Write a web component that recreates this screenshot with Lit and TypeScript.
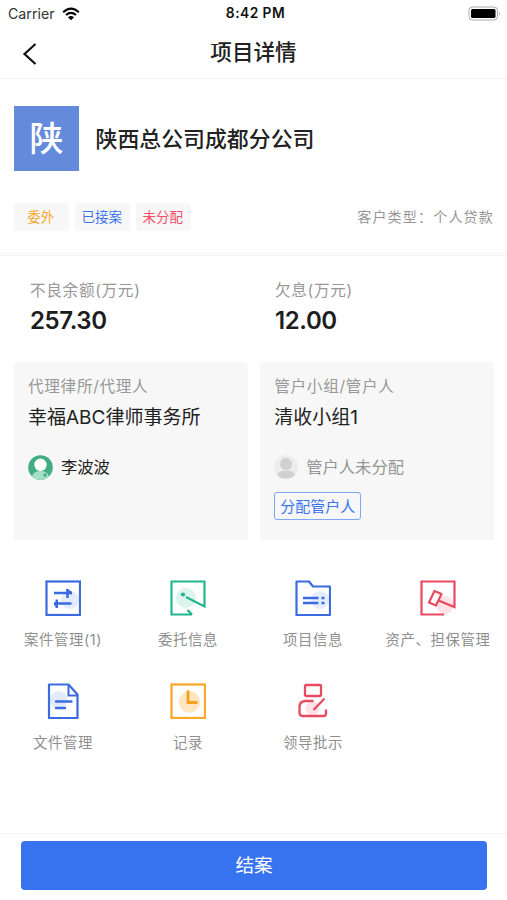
import { LitElement, html, css, svg } from "lit";
import { customElement } from "lit/decorators.js";

const icons = {
  transfer: svg`
    <circle cx="25" cy="20" r="9" fill="#e6ecff"/>
    <rect x="1.5" y="1.5" width="33.500" height="33.500" stroke="#3b6be0" stroke-width="2.200"/>
    <path d="M9 13H26.500M22.500 9V18M26.500 23.500H9.500M11.800 19.500V28" stroke="#3b6be0" stroke-width="2.500"/>
    <path d="M21.500 8.500L27 11.800V14.200H21.500ZM13 28.500L9 25V22.300H13Z" fill="#3b6be0"/>`,
  entrust: svg`
    <circle cx="16" cy="18" r="10" fill="#dcf4ec"/>
    <path d="M22 34.500H1.500V1.500H34.500V26.500L16 17M17.500 30L22 34.500" stroke="#22b68f" stroke-width="2.200"/>
    <circle cx="13" cy="14.500" r="2.100" fill="#22b68f"/>`,
  folder: svg`
    <circle cx="25" cy="20" r="9" fill="#e6ecff"/>
    <path d="M1.500 1.500H14L18 6.500H35V35H1.500Z" stroke="#3b6be0" stroke-width="2.200" stroke-linejoin="round"/>
    <path d="M8 18H23.500M8 23H23.500M26.500 18H29.500M26.500 23H29.500" stroke="#3b6be0" stroke-width="2.500"/>`,
  gavel: svg`
    <circle cx="25" cy="25" r="9" fill="#ffe3e7"/>
    <path d="M24 34.500H1.500V1.500H34.500V27L18.500 20.500" stroke="#e84a60" stroke-width="2.200"/>
    <path d="M14.500 11L21.500 14 16 25.500 9 22.500Z" stroke="#e84a60" stroke-width="2.200" stroke-linejoin="round"/>`,
  file: svg`
    <circle cx="13.500" cy="17" r="9" fill="#e3eafc"/>
    <path d="M4 1.500H23.500L32.500 11.500V35H4Z" stroke="#3b6be0" stroke-width="2.200" stroke-linejoin="round"/>
    <path d="M23.500 2.500V12.500H32" stroke="#3b6be0" stroke-width="2"/>
    <path d="M11 18.500H26.500M11 25H20" stroke="#3b6be0" stroke-width="2.400" stroke-linecap="round"/>`,
  clock: svg`
    <circle cx="19.500" cy="19" r="10.700" fill="#ffe6c0"/>
    <rect x="1.500" y="1.500" width="33.500" height="33.500" stroke="#fba92b" stroke-width="2.300"/>
    <path d="M18 7.500V19.500H27.500" stroke="#f5a01f" stroke-width="2.800"/>`,
  approve: svg`
    <circle cx="17.500" cy="25.500" r="7" fill="#ffe3e7"/>
    <rect x="10" y="2" width="16" height="11" rx="1" stroke="#e84a60" stroke-width="2.300"/>
    <path d="M18.500 18H10Q4.500 18.500 4.500 24V30Q4.500 33 8 33H28.500Q31 33 31 30.500V26.500" stroke="#e84a60" stroke-width="2.300"/>
    <path d="M18.500 27L29.500 15.500" stroke="#e84a60" stroke-width="2.300"/>`,
};

const actions: { icon: keyof typeof icons; label: string }[] = [
  { icon: "transfer", label: "案件管理(1)" },
  { icon: "entrust", label: "委托信息" },
  { icon: "folder", label: "项目信息" },
  { icon: "gavel", label: "资产、担保管理" },
  { icon: "file", label: "文件管理" },
  { icon: "clock", label: "记录" },
  { icon: "approve", label: "领导批示" },
];

@customElement("app-root")
export class AppRoot extends LitElement {
  static styles = css`
    :host {
      display: flex;
      flex-direction: column;
      height: 900px;
      overflow: hidden;
      background: #fff;
      color: #222;
      font-family: Inter, "Noto Sans CJK SC", sans-serif;
      white-space: nowrap;
    }
    * { box-sizing: border-box; }
    svg { display: block; flex: none; fill: none; }
    .status {
      display: grid;
      grid-template-columns: 1fr auto 1fr;
      align-items: center;
      height: 27px;
      padding: 0 6px 0 8px;
      font-size: 14px;
      line-height: 27px;
    }
    .carrier { display: flex; align-items: center; gap: 7px; font-size: 14.2px; color: #333; }
    .time { font-weight: 600; font-size: 13.8px; letter-spacing: .45px; color: #111; padding-left: 2px; }
    .battery { justify-self: end; }
    .nav {
      display: grid;
      grid-template-columns: 60px 1fr 60px;
      align-items: center;
      height: 52px;
      border-bottom: 1px solid #f0f0f0;
    }
    .back { margin: 2px 0 0 22px; }
    .title { text-align: center; font-size: 21.6px; line-height: 30px; font-weight: 500; padding-bottom: 1px; }
    .company { display: flex; align-items: center; gap: 16.500px; padding: 27px 14px 0; }
    .logo {
      width: 65px;
      height: 65px;
      background: #638adb;
      color: #fff;
      font-size: 34px;
      line-height: 65px;
      text-align: center;
      font-weight: 500;
    }
    .name { font-size: 21.9px; line-height: 30px; font-weight: 500; }
    .meta {
      display: flex;
      align-items: center;
      gap: 6.500px;
      padding: 0 14px;
      margin-top: 32px;
      height: 28px;
    }
    .tag {
      width: 54.500px;
      height: 28px;
      padding-right: 1px;
      border-radius: 3px;
      background: #f7f7f7;
      text-align: center;
      font-size: 13.5px;
      line-height: 28px;
    }
    .orange { color: #f7a62b; }
    .blue { color: #3b73ee; }
    .red { color: #f04d68; }
    .type { margin-left: auto; font-size: 14px; line-height: 28px; letter-spacing: 1.2px; color: #969696; margin-right: -1px; }
    .rule { height: 3px; margin-top: 22px; border: solid #f5f5f5; border-width: 1px 0; flex: none; }
    .stats { display: grid; grid-template-columns: 245px 1fr; padding: 23px 0 0 30px; }
    .label { font-size: 15.6px; letter-spacing: .7px; line-height: 24px; color: #989898; }
    .number { font-size: 24px; line-height: 30px; font-weight: 600; margin-top: 3px; letter-spacing: -.4px; color: #1d1d1d; }
    .cards { display: grid; grid-template-columns: 1fr 1fr; gap: 12.500px; padding: 0 13px 0 14px; margin-top: 26px; }
    .card { height: 178px; background: #f7f7f7; border-radius: 4px 4px 0 0; padding: 13px 14px; }
    .group { font-size: 19px; line-height: 28px; margin-top: 5px; }
    .person { display: flex; align-items: center; gap: 8px; height: 26px; margin-top: 22px; font-size: 16.300px; line-height: 24px; }
    .person span { padding-bottom: 1px; }
    .muted { color: #969696; }
    .assign {
      display: inline-block;
      height: 28px;
      margin-top: 12px;
      padding: 1px 5px 0;
      border: 1px solid #7ea5f7;
      border-radius: 3px;
      color: #3b73ee;
      font-size: 15px;
      line-height: 26px;
    }
    .actions {
      display: grid;
      grid-template-columns: repeat(4, 125px);
      grid-auto-rows: 103px;
      padding: 40px 0 0 .5px;
    }
    .action { display: flex; flex-direction: column; align-items: center; gap: 13px; }
    .caption { font-size: 14.400px; letter-spacing: .6px; line-height: 22px; color: #8f8f8f; }
    .footer { margin-top: auto; height: 67px; border-top: 1px solid #f2f2f2; padding: 7px 20px 0 21px; }
    .finish {
      height: 48.500px;
      border-radius: 4px;
      background: #3772ef;
      color: #fff;
      text-align: center;
      font-size: 18.600px;
      line-height: 48px;
    }
  `;

  render() {
    return html`
      <div class="status">
        <div class="carrier">Carrier
          <svg width="18" height="14" viewBox="0 0 18 14">
            <path d="M1.200 5.200Q9-1.800 16.800 5.200M4 8Q9 3.800 14 8" stroke="#000" stroke-width="2.200"/>
            <path d="M6 10.200Q9 7.800 12 10.200L9 13.200Z" fill="#000"/>
          </svg>
        </div>
        <div class="time">8:42 PM</div>
        <svg class="battery" width="33" height="15" viewBox="0 0 33 15">
          <rect x="1" y="1" width="28.500" height="13" rx="3.500" stroke="#aaa"/>
          <rect x="3" y="3" width="24.500" height="9" rx="1.500" fill="#000"/>
          <path d="M31 5.500Q32.500 7.500 31 9.500Z" fill="#999"/>
        </svg>
      </div>
      <div class="nav">
        <svg class="back" width="16" height="24" viewBox="0 0 16 24">
          <path d="M13.500 2L2.500 12L13.500 22" stroke="#111" stroke-width="2.200"/>
        </svg>
        <div class="title">项目详情</div>
      </div>
      <div class="company">
        <div class="logo">陕</div>
        <div class="name">陕西总公司成都分公司</div>
      </div>
      <div class="meta">
        <span class="tag orange">委外</span>
        <span class="tag blue">已接案</span>
        <span class="tag red">未分配</span>
        <span class="type">客户类型：个人贷款</span>
      </div>
      <div class="rule"></div>
      <div class="stats">
        <div><div class="label">不良余额(万元)</div><div class="number">257.30</div></div>
        <div><div class="label">欠息(万元)</div><div class="number">12.00</div></div>
      </div>
      <div class="cards">
        <div class="card">
          <div class="label">代理律所/代理人</div>
          <div class="group">幸福ABC律师事务所</div>
          <div class="person">
            <svg width="25" height="25" viewBox="0 0 25 25">
              <circle cx="12.500" cy="12.500" r="12.300" fill="#42ac83"/>
              <path d="M4 21.500Q5.500 16 12.500 16T21 21.500Q12.500 28.500 4 21.500Z" fill="#a6dfc7"/>
              <circle cx="12.500" cy="9.800" r="6.200" fill="#fff"/>
              <circle cx="17" cy="20" r="1.700" fill="#42ac83"/>
            </svg>
            <span>李波波</span>
          </div>
        </div>
        <div class="card">
          <div class="label">管户小组/管户人</div>
          <div class="group">清收小组1</div>
          <div class="person muted">
            <svg width="24" height="24" viewBox="0 0 24 24">
              <circle cx="12" cy="12" r="12" fill="#ededed"/>
              <circle cx="12" cy="9" r="6" fill="#d0d0d0"/>
              <ellipse cx="12" cy="19.500" rx="8.700" ry="4" fill="#d0d0d0"/>
            </svg>
            <span>管户人未分配</span>
          </div>
          <div class="assign">分配管户人</div>
        </div>
      </div>
      <div class="actions">
        ${actions.map(
          (a) => html`<div class="action">
            <svg width="36" height="36" viewBox="0 0 36 36">${icons[a.icon]}</svg>
            <span class="caption">${a.label}</span>
          </div>`
        )}
      </div>
      <div class="footer"><div class="finish">结案</div></div>
    `;
  }
}
